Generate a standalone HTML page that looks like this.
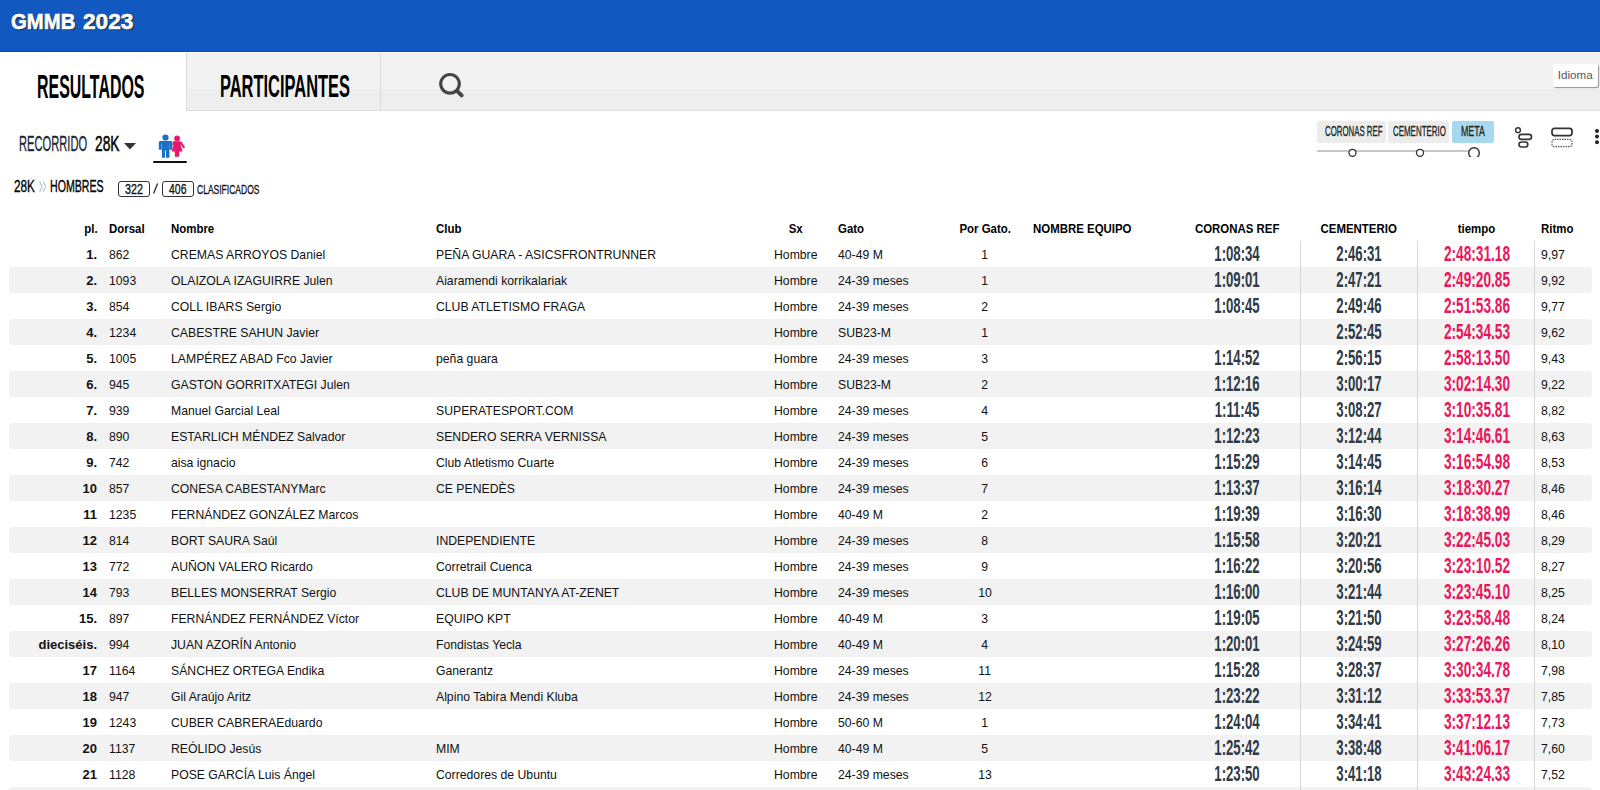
<!DOCTYPE html><html><head><meta charset="utf-8"><title>GMMB 2023</title><style>
*{margin:0;padding:0;box-sizing:border-box}
html,body{width:1600px;height:790px;overflow:hidden;background:#fff;font-family:"Liberation Sans",sans-serif;color:#111}
.a{position:absolute;white-space:nowrap}
.cx{display:inline-block;transform-origin:0 0;white-space:nowrap}
.sl{display:inline-block;transform:scaleX(0.955);transform-origin:0 0}.sc{display:inline-block;transform:scaleX(0.955);transform-origin:50% 0}
#hdr{position:absolute;left:0;top:0;width:1600px;height:52px;background:#1158c0;border-bottom:1px solid #0550bd}
#title{position:absolute;left:9px;top:9px;font-weight:bold;font-size:22.5px;color:#fff;text-shadow:1px 1px 1px #222;letter-spacing:-0.5px;-webkit-text-stroke:0.7px #fff}
#tabs{position:absolute;left:0;top:52px;width:1600px;height:59px;background:linear-gradient(#f2f2f2 0,#f2f2f2 36px,#eeeeee 36px,#eeeeee 100%);border-top:1px solid #fff;border-bottom:1px solid #dcdcdc}
#tab1{position:absolute;left:0;top:52px;width:186px;height:59px;background:#fff}
#tab2{position:absolute;left:186px;top:53px;width:195px;height:58px;box-shadow:inset 1px 0 #f4f4f4,inset 0 -1px #f3f3f3;border-left:1px solid #dadada;border-right:1px solid #dadada;border-bottom:1px solid #dcdcdc}
.tabt{position:absolute;font-weight:bold;font-size:32.5px;color:#000;line-height:1}
#idioma{position:absolute;left:1552.5px;top:64px;width:45.5px;height:22.5px;background:#fff;border-radius:2px;box-shadow:1px 1px 1px rgba(0,0,0,.4);font-size:11.6px;color:#555;line-height:22px;text-align:center}
.hd{position:absolute;top:222px;font-weight:bold;font-size:12.5px;line-height:14px;color:#000}
.row{position:absolute;left:0;width:1600px;height:26px}
.stripe{position:absolute;left:9px;width:1583px;height:26px;background:#f2f2f2;border-radius:4px}
.c{position:absolute;top:1px;line-height:26px;font-size:12.8px;color:#111;white-space:nowrap}
.t{position:absolute;top:4px;font-weight:bold;font-size:22.5px;line-height:18px;color:#2e3a46;white-space:nowrap}
.vl{position:absolute;top:241px;width:1px;height:549px;background:#d6d6d6}
</style></head><body>
<div id="hdr"></div>
<div class="a" style="left:10.70px;top:10.63px;line-height:1"><span class="cx" style="font-size:22.61px;line-height:1;font-weight:bold;color:#fff;transform:scaleX(0.8983);text-shadow:1px 1px 1px #222;-webkit-text-stroke:0.6px #fff">GMMB</span></div>
<div class="a" style="left:83.00px;top:10.64px;line-height:1"><span class="cx" style="font-size:22.54px;line-height:1;font-weight:bold;color:#fff;transform:scaleX(1.0072);text-shadow:1px 1px 1px #222;-webkit-text-stroke:0.6px #fff">2023</span></div>
<div id="tabs"></div><div id="tab1"></div><div id="tab2"></div>
<div class="a" style="left:36.50px;top:70.85px;line-height:1"><span class="cx" style="font-size:32.51px;line-height:1;font-weight:bold;color:#000;transform:scaleX(0.4906);">RESULTADOS</span></div>
<div class="a" style="left:220.00px;top:71.46px;line-height:1"><span class="cx" style="font-size:31.80px;line-height:1;font-weight:bold;color:#000;transform:scaleX(0.5169);">PARTICIPANTES</span></div>
<svg class="a" style="left:436px;top:71px" width="30" height="30" viewBox="0 0 30 30"><circle cx="14" cy="12.8" r="9.3" fill="none" stroke="#444" stroke-width="3.1"/><line x1="21" y1="19.8" x2="25.6" y2="24.4" stroke="#444" stroke-width="4" stroke-linecap="round"/></svg>
<div id="idioma">Idioma</div>
<div class="a" style="left:19.30px;top:132.99px;line-height:1"><span class="cx" style="font-size:22.19px;line-height:1;font-weight:normal;color:#1c2836;transform:scaleX(0.5028);-webkit-text-stroke:0.35px #1c2836">RECORRIDO</span></div>
<div class="a" style="left:94.50px;top:132.99px;line-height:1"><span class="cx" style="font-size:22.19px;line-height:1;font-weight:normal;color:#000;transform:scaleX(0.6203);-webkit-text-stroke:0.5px #000">28K</span></div>
<svg class="a" style="left:124px;top:143px" width="12" height="7"><path d="M0 0H12L6 6.5Z" fill="#333"/></svg>
<svg class="a" style="left:150px;top:130px" width="42" height="36" viewBox="0 0 42 36">
<g fill="#1a70c2"><circle cx="15.5" cy="7.5" r="3.1"/>
<path d="M10.2 10.9H20.8Q22.3 10.9 22.3 12.4V19.8H19.6V13.6H19.4V27.2Q19.4 27.8 18.6 27.8H16.6Q16 27.8 16 27.2V20.6H15V27.2Q15 27.8 14.4 27.8H12.6Q11.9 27.8 11.9 27.2V13.6H11.6V19.8H8.8V12.4Q8.8 10.9 10.2 10.9Z"/></g>
<g fill="#e8186e"><circle cx="27.1" cy="8.4" r="2.9"/>
<path d="M23.8 11.2H30.2Q31.2 11.2 31.8 12.1L35.1 17.5L33.5 18.5L30.6 14.2L30.5 14.6L32.6 21.4H29.2V26.3Q29.2 26.8 28.6 26.8H25.4Q24.8 26.8 24.8 26.3V21.4H21.6L23.6 14.6L22.6 16.2V12.4Q22.6 11.2 23.8 11.2Z"/></g>
</svg>
<div class="a" style="left:153px;top:160.7px;width:34px;height:2.6px;background:#111;border-radius:1px"></div>
<div class="a" style="left:14.00px;top:177.83px;line-height:1"><span class="cx" style="font-size:17.24px;line-height:1;font-weight:normal;color:#000;transform:scaleX(0.6842);-webkit-text-stroke:0.35px #000">28K</span></div>
<svg class="a" style="left:0;top:170px" width="60" height="30"><path d="M39.6 11.6Q42.2 16.6 41.9 16.6Q42.2 16.6 39.6 21.8M43.2 11.6Q45.8 16.6 45.5 16.6Q45.8 16.6 43.2 21.8" fill="none" stroke="#b3bdca" stroke-width="1.1"/></svg>
<div class="a" style="left:49.90px;top:177.83px;line-height:1"><span class="cx" style="font-size:17.24px;line-height:1;font-weight:normal;color:#000;transform:scaleX(0.6161);-webkit-text-stroke:0.35px #000">HOMBRES</span></div>
<div class="a" style="left:118px;top:181px;width:32px;height:16px;border:1px solid #333;border-radius:3px"></div>
<div class="a" style="left:162px;top:181px;width:32px;height:16px;border:1px solid #333;border-radius:3px"></div>
<div class="a" style="left:125.00px;top:180.79px;line-height:1"><span class="cx" style="font-size:14.84px;line-height:1;font-weight:normal;color:#111;transform:scaleX(0.7274);-webkit-text-stroke:0.35px #111">322</span></div>
<svg class="a" style="left:150px;top:180px" width="12" height="16"><line x1="7.6" y1="3.5" x2="3.6" y2="13.5" stroke="#222" stroke-width="1.2"/></svg>
<div class="a" style="left:168.50px;top:180.79px;line-height:1"><span class="cx" style="font-size:14.84px;line-height:1;font-weight:normal;color:#111;transform:scaleX(0.7071);-webkit-text-stroke:0.35px #111">406</span></div>
<div class="a" style="left:196.50px;top:181.18px;line-height:1"><span class="cx" style="font-size:13.57px;line-height:1;font-weight:normal;color:#111;transform:scaleX(0.6280);-webkit-text-stroke:0.3px #111">CLASIFICADOS</span></div>
<div class="a" style="left:1317px;top:121px;width:69px;height:22px;background:#ececec;border-radius:2px"></div>
<div class="a" style="left:1388px;top:121px;width:61px;height:22px;background:#ececec;border-radius:2px"></div>
<div class="a" style="left:1452px;top:121px;width:42px;height:22px;background:#a6d8ee;border-radius:2px"></div>
<div class="a" style="left:1324.80px;top:123.03px;line-height:1"><span class="cx" style="font-size:14.56px;line-height:1;font-weight:normal;color:#222;transform:scaleX(0.5394);-webkit-text-stroke:0.3px #222">CORONAS REF</span></div>
<div class="a" style="left:1392.50px;top:123.03px;line-height:1"><span class="cx" style="font-size:14.56px;line-height:1;font-weight:normal;color:#222;transform:scaleX(0.5450);-webkit-text-stroke:0.3px #222">CEMENTERIO</span></div>
<div class="a" style="left:1460.80px;top:122.81px;line-height:1"><span class="cx" style="font-size:14.98px;line-height:1;font-weight:normal;color:#222;transform:scaleX(0.5873);-webkit-text-stroke:0.3px #222">META</span></div>
<svg class="a" style="left:1314px;top:145px" width="170" height="12">
<line x1="3" y1="6" x2="160" y2="6" stroke="#c8c8c8" stroke-width="2"/>
<circle cx="38.5" cy="7.8" r="3.5" fill="#fff" stroke="#333" stroke-width="1.3"/>
<circle cx="106" cy="7.8" r="3.5" fill="#fff" stroke="#333" stroke-width="1.3"/>
<circle cx="160" cy="8" r="5.3" fill="#fff" stroke="#333" stroke-width="1.4"/>
</svg>
<svg class="a" style="left:1512px;top:124px" width="88" height="28">
<circle cx="6" cy="6.2" r="2.4" fill="none" stroke="#333" stroke-width="1.4"/>
<rect x="7" y="10.4" width="12.5" height="5" rx="2.5" fill="none" stroke="#333" stroke-width="1.6"/>
<rect x="7" y="18" width="8.8" height="5" rx="2.5" fill="none" stroke="#333" stroke-width="1.6"/>
<rect x="40" y="4.3" width="20" height="7.3" rx="2.5" fill="none" stroke="#333" stroke-width="1.7"/>
<rect x="40" y="15.4" width="20" height="7.3" rx="2.5" fill="none" stroke="#555" stroke-width="1.2" stroke-dasharray="1.5 1"/>
<circle cx="85" cy="7" r="2" fill="#222"/><circle cx="85" cy="12.5" r="2" fill="#222"/><circle cx="85" cy="18.3" r="2" fill="#222"/>
</svg>
<div class="hd" style="left:-62px;width:160px;text-align:right;"><span class="cx" style="transform:scaleX(0.915);transform-origin:100% 0">pl.</span></div>
<div class="hd" style="left:109px;"><span class="cx" style="transform:scaleX(0.915);transform-origin:0 0">Dorsal</span></div>
<div class="hd" style="left:171px;"><span class="cx" style="transform:scaleX(0.915);transform-origin:0 0">Nombre</span></div>
<div class="hd" style="left:436px;"><span class="cx" style="transform:scaleX(0.915);transform-origin:0 0">Club</span></div>
<div class="hd" style="left:715.5px;width:160px;text-align:center;"><span class="cx" style="transform:scaleX(0.915);transform-origin:50% 0">Sx</span></div>
<div class="hd" style="left:838px;"><span class="cx" style="transform:scaleX(0.915);transform-origin:0 0">Gato</span></div>
<div class="hd" style="left:905.0px;width:160px;text-align:center;"><span class="cx" style="transform:scaleX(0.915);transform-origin:50% 0">Por Gato.</span></div>
<div class="hd" style="left:1033px;"><span class="cx" style="transform:scaleX(0.915);transform-origin:0 0">NOMBRE EQUIPO</span></div>
<div class="hd" style="left:1157.0px;width:160px;text-align:center;"><span class="cx" style="transform:scaleX(0.915);transform-origin:50% 0">CORONAS REF</span></div>
<div class="hd" style="left:1279.0px;width:160px;text-align:center;"><span class="cx" style="transform:scaleX(0.915);transform-origin:50% 0">CEMENTERIO</span></div>
<div class="hd" style="left:1396.0px;width:160px;text-align:center;"><span class="cx" style="transform:scaleX(0.915);transform-origin:50% 0">tiempo</span></div>
<div class="hd" style="left:1541px;"><span class="cx" style="transform:scaleX(0.915);transform-origin:0 0">Ritmo</span></div>
<div class="stripe" style="top:267px"></div>
<div class="stripe" style="top:319px"></div>
<div class="stripe" style="top:371px"></div>
<div class="stripe" style="top:423px"></div>
<div class="stripe" style="top:475px"></div>
<div class="stripe" style="top:527px"></div>
<div class="stripe" style="top:579px"></div>
<div class="stripe" style="top:631px"></div>
<div class="stripe" style="top:683px"></div>
<div class="stripe" style="top:735px"></div>
<div class="stripe" style="top:787px"></div>
<div class="vl" style="left:1300px"></div>
<div class="vl" style="left:1417px"></div>
<div class="vl" style="left:1534px"></div>
<div class="row" style="top:241px"><div class="c" style="left:-23px;width:120px;text-align:right;font-weight:bold;font-size:13px">1.</div><div class="c" style="left:109px"><span class="sl">862</span></div><div class="c" style="left:171px"><span class="sl">CREMAS ARROYOS Daniel</span></div><div class="c" style="left:436px"><span class="sl">PEÑA GUARA - ASICSFRONTRUNNER</span></div><div class="c" style="left:745.5px;width:100px;text-align:center;"><span class="sc">Hombre</span></div><div class="c" style="left:838px"><span class="sl">40-49 M</span></div><div class="c" style="left:955.0px;width:60px;text-align:center;"><span class="sc">1</span></div><div class="t" style="left:1237px"><span class="cx" style="transform:scaleX(0.585) translateX(-50%);transform-origin:0 0">1:08:34</span></div><div class="t" style="left:1359px"><span class="cx" style="transform:scaleX(0.585) translateX(-50%);transform-origin:0 0">2:46:31</span></div><div class="t" style="left:1477px;color:#e8175d"><span class="cx" style="transform:scaleX(0.607) translateX(-50%);transform-origin:0 0">2:48:31.18</span></div><div class="c" style="left:1541px"><span class="sl">9,97</span></div></div>
<div class="row" style="top:267px"><div class="c" style="left:-23px;width:120px;text-align:right;font-weight:bold;font-size:13px">2.</div><div class="c" style="left:109px"><span class="sl">1093</span></div><div class="c" style="left:171px"><span class="sl">OLAIZOLA IZAGUIRRE Julen</span></div><div class="c" style="left:436px"><span class="sl">Aiaramendi korrikalariak</span></div><div class="c" style="left:745.5px;width:100px;text-align:center;"><span class="sc">Hombre</span></div><div class="c" style="left:838px"><span class="sl">24-39 meses</span></div><div class="c" style="left:955.0px;width:60px;text-align:center;"><span class="sc">1</span></div><div class="t" style="left:1237px"><span class="cx" style="transform:scaleX(0.585) translateX(-50%);transform-origin:0 0">1:09:01</span></div><div class="t" style="left:1359px"><span class="cx" style="transform:scaleX(0.585) translateX(-50%);transform-origin:0 0">2:47:21</span></div><div class="t" style="left:1477px;color:#e8175d"><span class="cx" style="transform:scaleX(0.607) translateX(-50%);transform-origin:0 0">2:49:20.85</span></div><div class="c" style="left:1541px"><span class="sl">9,92</span></div></div>
<div class="row" style="top:293px"><div class="c" style="left:-23px;width:120px;text-align:right;font-weight:bold;font-size:13px">3.</div><div class="c" style="left:109px"><span class="sl">854</span></div><div class="c" style="left:171px"><span class="sl">COLL IBARS Sergio</span></div><div class="c" style="left:436px"><span class="sl">CLUB ATLETISMO FRAGA</span></div><div class="c" style="left:745.5px;width:100px;text-align:center;"><span class="sc">Hombre</span></div><div class="c" style="left:838px"><span class="sl">24-39 meses</span></div><div class="c" style="left:955.0px;width:60px;text-align:center;"><span class="sc">2</span></div><div class="t" style="left:1237px"><span class="cx" style="transform:scaleX(0.585) translateX(-50%);transform-origin:0 0">1:08:45</span></div><div class="t" style="left:1359px"><span class="cx" style="transform:scaleX(0.585) translateX(-50%);transform-origin:0 0">2:49:46</span></div><div class="t" style="left:1477px;color:#e8175d"><span class="cx" style="transform:scaleX(0.607) translateX(-50%);transform-origin:0 0">2:51:53.86</span></div><div class="c" style="left:1541px"><span class="sl">9,77</span></div></div>
<div class="row" style="top:319px"><div class="c" style="left:-23px;width:120px;text-align:right;font-weight:bold;font-size:13px">4.</div><div class="c" style="left:109px"><span class="sl">1234</span></div><div class="c" style="left:171px"><span class="sl">CABESTRE SAHUN Javier</span></div><div class="c" style="left:436px"><span class="sl"></span></div><div class="c" style="left:745.5px;width:100px;text-align:center;"><span class="sc">Hombre</span></div><div class="c" style="left:838px"><span class="sl">SUB23-M</span></div><div class="c" style="left:955.0px;width:60px;text-align:center;"><span class="sc">1</span></div><div class="t" style="left:1237px"><span class="cx" style="transform:scaleX(0.585) translateX(-50%);transform-origin:0 0"></span></div><div class="t" style="left:1359px"><span class="cx" style="transform:scaleX(0.585) translateX(-50%);transform-origin:0 0">2:52:45</span></div><div class="t" style="left:1477px;color:#e8175d"><span class="cx" style="transform:scaleX(0.607) translateX(-50%);transform-origin:0 0">2:54:34.53</span></div><div class="c" style="left:1541px"><span class="sl">9,62</span></div></div>
<div class="row" style="top:345px"><div class="c" style="left:-23px;width:120px;text-align:right;font-weight:bold;font-size:13px">5.</div><div class="c" style="left:109px"><span class="sl">1005</span></div><div class="c" style="left:171px"><span class="sl">LAMPÉREZ ABAD Fco Javier</span></div><div class="c" style="left:436px"><span class="sl">peña guara</span></div><div class="c" style="left:745.5px;width:100px;text-align:center;"><span class="sc">Hombre</span></div><div class="c" style="left:838px"><span class="sl">24-39 meses</span></div><div class="c" style="left:955.0px;width:60px;text-align:center;"><span class="sc">3</span></div><div class="t" style="left:1237px"><span class="cx" style="transform:scaleX(0.585) translateX(-50%);transform-origin:0 0">1:14:52</span></div><div class="t" style="left:1359px"><span class="cx" style="transform:scaleX(0.585) translateX(-50%);transform-origin:0 0">2:56:15</span></div><div class="t" style="left:1477px;color:#e8175d"><span class="cx" style="transform:scaleX(0.607) translateX(-50%);transform-origin:0 0">2:58:13.50</span></div><div class="c" style="left:1541px"><span class="sl">9,43</span></div></div>
<div class="row" style="top:371px"><div class="c" style="left:-23px;width:120px;text-align:right;font-weight:bold;font-size:13px">6.</div><div class="c" style="left:109px"><span class="sl">945</span></div><div class="c" style="left:171px"><span class="sl">GASTON GORRITXATEGI Julen</span></div><div class="c" style="left:436px"><span class="sl"></span></div><div class="c" style="left:745.5px;width:100px;text-align:center;"><span class="sc">Hombre</span></div><div class="c" style="left:838px"><span class="sl">SUB23-M</span></div><div class="c" style="left:955.0px;width:60px;text-align:center;"><span class="sc">2</span></div><div class="t" style="left:1237px"><span class="cx" style="transform:scaleX(0.585) translateX(-50%);transform-origin:0 0">1:12:16</span></div><div class="t" style="left:1359px"><span class="cx" style="transform:scaleX(0.585) translateX(-50%);transform-origin:0 0">3:00:17</span></div><div class="t" style="left:1477px;color:#e8175d"><span class="cx" style="transform:scaleX(0.607) translateX(-50%);transform-origin:0 0">3:02:14.30</span></div><div class="c" style="left:1541px"><span class="sl">9,22</span></div></div>
<div class="row" style="top:397px"><div class="c" style="left:-23px;width:120px;text-align:right;font-weight:bold;font-size:13px">7.</div><div class="c" style="left:109px"><span class="sl">939</span></div><div class="c" style="left:171px"><span class="sl">Manuel Garcial Leal</span></div><div class="c" style="left:436px"><span class="sl">SUPERATESPORT.COM</span></div><div class="c" style="left:745.5px;width:100px;text-align:center;"><span class="sc">Hombre</span></div><div class="c" style="left:838px"><span class="sl">24-39 meses</span></div><div class="c" style="left:955.0px;width:60px;text-align:center;"><span class="sc">4</span></div><div class="t" style="left:1237px"><span class="cx" style="transform:scaleX(0.585) translateX(-50%);transform-origin:0 0">1:11:45</span></div><div class="t" style="left:1359px"><span class="cx" style="transform:scaleX(0.585) translateX(-50%);transform-origin:0 0">3:08:27</span></div><div class="t" style="left:1477px;color:#e8175d"><span class="cx" style="transform:scaleX(0.607) translateX(-50%);transform-origin:0 0">3:10:35.81</span></div><div class="c" style="left:1541px"><span class="sl">8,82</span></div></div>
<div class="row" style="top:423px"><div class="c" style="left:-23px;width:120px;text-align:right;font-weight:bold;font-size:13px">8.</div><div class="c" style="left:109px"><span class="sl">890</span></div><div class="c" style="left:171px"><span class="sl">ESTARLICH MÉNDEZ Salvador</span></div><div class="c" style="left:436px"><span class="sl">SENDERO SERRA VERNISSA</span></div><div class="c" style="left:745.5px;width:100px;text-align:center;"><span class="sc">Hombre</span></div><div class="c" style="left:838px"><span class="sl">24-39 meses</span></div><div class="c" style="left:955.0px;width:60px;text-align:center;"><span class="sc">5</span></div><div class="t" style="left:1237px"><span class="cx" style="transform:scaleX(0.585) translateX(-50%);transform-origin:0 0">1:12:23</span></div><div class="t" style="left:1359px"><span class="cx" style="transform:scaleX(0.585) translateX(-50%);transform-origin:0 0">3:12:44</span></div><div class="t" style="left:1477px;color:#e8175d"><span class="cx" style="transform:scaleX(0.607) translateX(-50%);transform-origin:0 0">3:14:46.61</span></div><div class="c" style="left:1541px"><span class="sl">8,63</span></div></div>
<div class="row" style="top:449px"><div class="c" style="left:-23px;width:120px;text-align:right;font-weight:bold;font-size:13px">9.</div><div class="c" style="left:109px"><span class="sl">742</span></div><div class="c" style="left:171px"><span class="sl">aisa ignacio</span></div><div class="c" style="left:436px"><span class="sl">Club Atletismo Cuarte</span></div><div class="c" style="left:745.5px;width:100px;text-align:center;"><span class="sc">Hombre</span></div><div class="c" style="left:838px"><span class="sl">24-39 meses</span></div><div class="c" style="left:955.0px;width:60px;text-align:center;"><span class="sc">6</span></div><div class="t" style="left:1237px"><span class="cx" style="transform:scaleX(0.585) translateX(-50%);transform-origin:0 0">1:15:29</span></div><div class="t" style="left:1359px"><span class="cx" style="transform:scaleX(0.585) translateX(-50%);transform-origin:0 0">3:14:45</span></div><div class="t" style="left:1477px;color:#e8175d"><span class="cx" style="transform:scaleX(0.607) translateX(-50%);transform-origin:0 0">3:16:54.98</span></div><div class="c" style="left:1541px"><span class="sl">8,53</span></div></div>
<div class="row" style="top:475px"><div class="c" style="left:-23px;width:120px;text-align:right;font-weight:bold;font-size:13px">10</div><div class="c" style="left:109px"><span class="sl">857</span></div><div class="c" style="left:171px"><span class="sl">CONESA CABESTANYMarc</span></div><div class="c" style="left:436px"><span class="sl">CE PENEDÈS</span></div><div class="c" style="left:745.5px;width:100px;text-align:center;"><span class="sc">Hombre</span></div><div class="c" style="left:838px"><span class="sl">24-39 meses</span></div><div class="c" style="left:955.0px;width:60px;text-align:center;"><span class="sc">7</span></div><div class="t" style="left:1237px"><span class="cx" style="transform:scaleX(0.585) translateX(-50%);transform-origin:0 0">1:13:37</span></div><div class="t" style="left:1359px"><span class="cx" style="transform:scaleX(0.585) translateX(-50%);transform-origin:0 0">3:16:14</span></div><div class="t" style="left:1477px;color:#e8175d"><span class="cx" style="transform:scaleX(0.607) translateX(-50%);transform-origin:0 0">3:18:30.27</span></div><div class="c" style="left:1541px"><span class="sl">8,46</span></div></div>
<div class="row" style="top:501px"><div class="c" style="left:-23px;width:120px;text-align:right;font-weight:bold;font-size:13px">11</div><div class="c" style="left:109px"><span class="sl">1235</span></div><div class="c" style="left:171px"><span class="sl">FERNÁNDEZ GONZÁLEZ Marcos</span></div><div class="c" style="left:436px"><span class="sl"></span></div><div class="c" style="left:745.5px;width:100px;text-align:center;"><span class="sc">Hombre</span></div><div class="c" style="left:838px"><span class="sl">40-49 M</span></div><div class="c" style="left:955.0px;width:60px;text-align:center;"><span class="sc">2</span></div><div class="t" style="left:1237px"><span class="cx" style="transform:scaleX(0.585) translateX(-50%);transform-origin:0 0">1:19:39</span></div><div class="t" style="left:1359px"><span class="cx" style="transform:scaleX(0.585) translateX(-50%);transform-origin:0 0">3:16:30</span></div><div class="t" style="left:1477px;color:#e8175d"><span class="cx" style="transform:scaleX(0.607) translateX(-50%);transform-origin:0 0">3:18:38.99</span></div><div class="c" style="left:1541px"><span class="sl">8,46</span></div></div>
<div class="row" style="top:527px"><div class="c" style="left:-23px;width:120px;text-align:right;font-weight:bold;font-size:13px">12</div><div class="c" style="left:109px"><span class="sl">814</span></div><div class="c" style="left:171px"><span class="sl">BORT SAURA Saúl</span></div><div class="c" style="left:436px"><span class="sl">INDEPENDIENTE</span></div><div class="c" style="left:745.5px;width:100px;text-align:center;"><span class="sc">Hombre</span></div><div class="c" style="left:838px"><span class="sl">24-39 meses</span></div><div class="c" style="left:955.0px;width:60px;text-align:center;"><span class="sc">8</span></div><div class="t" style="left:1237px"><span class="cx" style="transform:scaleX(0.585) translateX(-50%);transform-origin:0 0">1:15:58</span></div><div class="t" style="left:1359px"><span class="cx" style="transform:scaleX(0.585) translateX(-50%);transform-origin:0 0">3:20:21</span></div><div class="t" style="left:1477px;color:#e8175d"><span class="cx" style="transform:scaleX(0.607) translateX(-50%);transform-origin:0 0">3:22:45.03</span></div><div class="c" style="left:1541px"><span class="sl">8,29</span></div></div>
<div class="row" style="top:553px"><div class="c" style="left:-23px;width:120px;text-align:right;font-weight:bold;font-size:13px">13</div><div class="c" style="left:109px"><span class="sl">772</span></div><div class="c" style="left:171px"><span class="sl">AUÑON VALERO Ricardo</span></div><div class="c" style="left:436px"><span class="sl">Corretrail Cuenca</span></div><div class="c" style="left:745.5px;width:100px;text-align:center;"><span class="sc">Hombre</span></div><div class="c" style="left:838px"><span class="sl">24-39 meses</span></div><div class="c" style="left:955.0px;width:60px;text-align:center;"><span class="sc">9</span></div><div class="t" style="left:1237px"><span class="cx" style="transform:scaleX(0.585) translateX(-50%);transform-origin:0 0">1:16:22</span></div><div class="t" style="left:1359px"><span class="cx" style="transform:scaleX(0.585) translateX(-50%);transform-origin:0 0">3:20:56</span></div><div class="t" style="left:1477px;color:#e8175d"><span class="cx" style="transform:scaleX(0.607) translateX(-50%);transform-origin:0 0">3:23:10.52</span></div><div class="c" style="left:1541px"><span class="sl">8,27</span></div></div>
<div class="row" style="top:579px"><div class="c" style="left:-23px;width:120px;text-align:right;font-weight:bold;font-size:13px">14</div><div class="c" style="left:109px"><span class="sl">793</span></div><div class="c" style="left:171px"><span class="sl">BELLES MONSERRAT Sergio</span></div><div class="c" style="left:436px"><span class="sl">CLUB DE MUNTANYA AT-ZENET</span></div><div class="c" style="left:745.5px;width:100px;text-align:center;"><span class="sc">Hombre</span></div><div class="c" style="left:838px"><span class="sl">24-39 meses</span></div><div class="c" style="left:955.0px;width:60px;text-align:center;"><span class="sc">10</span></div><div class="t" style="left:1237px"><span class="cx" style="transform:scaleX(0.585) translateX(-50%);transform-origin:0 0">1:16:00</span></div><div class="t" style="left:1359px"><span class="cx" style="transform:scaleX(0.585) translateX(-50%);transform-origin:0 0">3:21:44</span></div><div class="t" style="left:1477px;color:#e8175d"><span class="cx" style="transform:scaleX(0.607) translateX(-50%);transform-origin:0 0">3:23:45.10</span></div><div class="c" style="left:1541px"><span class="sl">8,25</span></div></div>
<div class="row" style="top:605px"><div class="c" style="left:-23px;width:120px;text-align:right;font-weight:bold;font-size:13px">15.</div><div class="c" style="left:109px"><span class="sl">897</span></div><div class="c" style="left:171px"><span class="sl">FERNÁNDEZ FERNÁNDEZ Víctor</span></div><div class="c" style="left:436px"><span class="sl">EQUIPO KPT</span></div><div class="c" style="left:745.5px;width:100px;text-align:center;"><span class="sc">Hombre</span></div><div class="c" style="left:838px"><span class="sl">40-49 M</span></div><div class="c" style="left:955.0px;width:60px;text-align:center;"><span class="sc">3</span></div><div class="t" style="left:1237px"><span class="cx" style="transform:scaleX(0.585) translateX(-50%);transform-origin:0 0">1:19:05</span></div><div class="t" style="left:1359px"><span class="cx" style="transform:scaleX(0.585) translateX(-50%);transform-origin:0 0">3:21:50</span></div><div class="t" style="left:1477px;color:#e8175d"><span class="cx" style="transform:scaleX(0.607) translateX(-50%);transform-origin:0 0">3:23:58.48</span></div><div class="c" style="left:1541px"><span class="sl">8,24</span></div></div>
<div class="row" style="top:631px"><div class="c" style="left:-23px;width:120px;text-align:right;font-weight:bold;font-size:13px">dieciséis.</div><div class="c" style="left:109px"><span class="sl">994</span></div><div class="c" style="left:171px"><span class="sl">JUAN AZORÍN Antonio</span></div><div class="c" style="left:436px"><span class="sl">Fondistas Yecla</span></div><div class="c" style="left:745.5px;width:100px;text-align:center;"><span class="sc">Hombre</span></div><div class="c" style="left:838px"><span class="sl">40-49 M</span></div><div class="c" style="left:955.0px;width:60px;text-align:center;"><span class="sc">4</span></div><div class="t" style="left:1237px"><span class="cx" style="transform:scaleX(0.585) translateX(-50%);transform-origin:0 0">1:20:01</span></div><div class="t" style="left:1359px"><span class="cx" style="transform:scaleX(0.585) translateX(-50%);transform-origin:0 0">3:24:59</span></div><div class="t" style="left:1477px;color:#e8175d"><span class="cx" style="transform:scaleX(0.607) translateX(-50%);transform-origin:0 0">3:27:26.26</span></div><div class="c" style="left:1541px"><span class="sl">8,10</span></div></div>
<div class="row" style="top:657px"><div class="c" style="left:-23px;width:120px;text-align:right;font-weight:bold;font-size:13px">17</div><div class="c" style="left:109px"><span class="sl">1164</span></div><div class="c" style="left:171px"><span class="sl">SÁNCHEZ ORTEGA Endika</span></div><div class="c" style="left:436px"><span class="sl">Ganerantz</span></div><div class="c" style="left:745.5px;width:100px;text-align:center;"><span class="sc">Hombre</span></div><div class="c" style="left:838px"><span class="sl">24-39 meses</span></div><div class="c" style="left:955.0px;width:60px;text-align:center;"><span class="sc">11</span></div><div class="t" style="left:1237px"><span class="cx" style="transform:scaleX(0.585) translateX(-50%);transform-origin:0 0">1:15:28</span></div><div class="t" style="left:1359px"><span class="cx" style="transform:scaleX(0.585) translateX(-50%);transform-origin:0 0">3:28:37</span></div><div class="t" style="left:1477px;color:#e8175d"><span class="cx" style="transform:scaleX(0.607) translateX(-50%);transform-origin:0 0">3:30:34.78</span></div><div class="c" style="left:1541px"><span class="sl">7,98</span></div></div>
<div class="row" style="top:683px"><div class="c" style="left:-23px;width:120px;text-align:right;font-weight:bold;font-size:13px">18</div><div class="c" style="left:109px"><span class="sl">947</span></div><div class="c" style="left:171px"><span class="sl">Gil Araújo Aritz</span></div><div class="c" style="left:436px"><span class="sl">Alpino Tabira Mendi Kluba</span></div><div class="c" style="left:745.5px;width:100px;text-align:center;"><span class="sc">Hombre</span></div><div class="c" style="left:838px"><span class="sl">24-39 meses</span></div><div class="c" style="left:955.0px;width:60px;text-align:center;"><span class="sc">12</span></div><div class="t" style="left:1237px"><span class="cx" style="transform:scaleX(0.585) translateX(-50%);transform-origin:0 0">1:23:22</span></div><div class="t" style="left:1359px"><span class="cx" style="transform:scaleX(0.585) translateX(-50%);transform-origin:0 0">3:31:12</span></div><div class="t" style="left:1477px;color:#e8175d"><span class="cx" style="transform:scaleX(0.607) translateX(-50%);transform-origin:0 0">3:33:53.37</span></div><div class="c" style="left:1541px"><span class="sl">7,85</span></div></div>
<div class="row" style="top:709px"><div class="c" style="left:-23px;width:120px;text-align:right;font-weight:bold;font-size:13px">19</div><div class="c" style="left:109px"><span class="sl">1243</span></div><div class="c" style="left:171px"><span class="sl">CUBER CABRERAEduardo</span></div><div class="c" style="left:436px"><span class="sl"></span></div><div class="c" style="left:745.5px;width:100px;text-align:center;"><span class="sc">Hombre</span></div><div class="c" style="left:838px"><span class="sl">50-60 M</span></div><div class="c" style="left:955.0px;width:60px;text-align:center;"><span class="sc">1</span></div><div class="t" style="left:1237px"><span class="cx" style="transform:scaleX(0.585) translateX(-50%);transform-origin:0 0">1:24:04</span></div><div class="t" style="left:1359px"><span class="cx" style="transform:scaleX(0.585) translateX(-50%);transform-origin:0 0">3:34:41</span></div><div class="t" style="left:1477px;color:#e8175d"><span class="cx" style="transform:scaleX(0.607) translateX(-50%);transform-origin:0 0">3:37:12.13</span></div><div class="c" style="left:1541px"><span class="sl">7,73</span></div></div>
<div class="row" style="top:735px"><div class="c" style="left:-23px;width:120px;text-align:right;font-weight:bold;font-size:13px">20</div><div class="c" style="left:109px"><span class="sl">1137</span></div><div class="c" style="left:171px"><span class="sl">REÓLIDO Jesús</span></div><div class="c" style="left:436px"><span class="sl">MIM</span></div><div class="c" style="left:745.5px;width:100px;text-align:center;"><span class="sc">Hombre</span></div><div class="c" style="left:838px"><span class="sl">40-49 M</span></div><div class="c" style="left:955.0px;width:60px;text-align:center;"><span class="sc">5</span></div><div class="t" style="left:1237px"><span class="cx" style="transform:scaleX(0.585) translateX(-50%);transform-origin:0 0">1:25:42</span></div><div class="t" style="left:1359px"><span class="cx" style="transform:scaleX(0.585) translateX(-50%);transform-origin:0 0">3:38:48</span></div><div class="t" style="left:1477px;color:#e8175d"><span class="cx" style="transform:scaleX(0.607) translateX(-50%);transform-origin:0 0">3:41:06.17</span></div><div class="c" style="left:1541px"><span class="sl">7,60</span></div></div>
<div class="row" style="top:761px"><div class="c" style="left:-23px;width:120px;text-align:right;font-weight:bold;font-size:13px">21</div><div class="c" style="left:109px"><span class="sl">1128</span></div><div class="c" style="left:171px"><span class="sl">POSE GARCÍA Luis Ángel</span></div><div class="c" style="left:436px"><span class="sl">Corredores de Ubuntu</span></div><div class="c" style="left:745.5px;width:100px;text-align:center;"><span class="sc">Hombre</span></div><div class="c" style="left:838px"><span class="sl">24-39 meses</span></div><div class="c" style="left:955.0px;width:60px;text-align:center;"><span class="sc">13</span></div><div class="t" style="left:1237px"><span class="cx" style="transform:scaleX(0.585) translateX(-50%);transform-origin:0 0">1:23:50</span></div><div class="t" style="left:1359px"><span class="cx" style="transform:scaleX(0.585) translateX(-50%);transform-origin:0 0">3:41:18</span></div><div class="t" style="left:1477px;color:#e8175d"><span class="cx" style="transform:scaleX(0.607) translateX(-50%);transform-origin:0 0">3:43:24.33</span></div><div class="c" style="left:1541px"><span class="sl">7,52</span></div></div>
</body></html>
